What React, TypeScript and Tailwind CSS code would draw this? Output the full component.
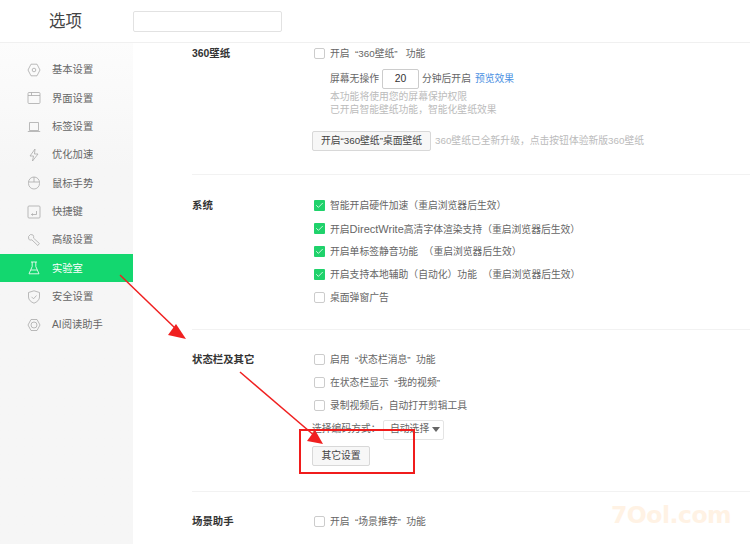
import { Check } from "lucide-react";
import type { ReactNode } from "react";

const FONT = "font-['Liberation_Sans','Noto_Sans_CJK_SC',sans-serif]";

function SideIcon({ name }: { name: string }) {
  const common = {
    width: 14,
    height: 14,
    viewBox: "0 0 14 14",
    fill: "none",
    stroke: "currentColor",
    strokeWidth: 0.8,
  };
  switch (name) {
    case "basic":
      return (
        <svg {...common}>
          <path d="M4 1.200h6L13 7l-3 5.800H4L1 7z" />
          <circle cx="7" cy="7" r="1.800" />
        </svg>
      );
    case "ui":
      return (
        <svg {...common}>
          <rect x="1" y="1.500" width="12" height="11" rx="1" />
          <path d="M1 4.500h12M4.500 1.500v3" />
        </svg>
      );
    case "tab":
      return (
        <svg {...common}>
          <path d="M2.500 2.500h9v8h-9zM0.800 11.500h12.400" />
        </svg>
      );
    case "speed":
      return (
        <svg {...common}>
          <path d="M8 1 3 8h3.500L5.500 13 11 6H7.500z" />
        </svg>
      );
    case "mouse":
      return (
        <svg {...common}>
          <rect x="1.500" y="1" width="11" height="12" rx="5.500" />
          <path d="M1.500 6h11M7 1v5" />
        </svg>
      );
    case "key":
      return (
        <svg {...common}>
          <rect x="1" y="1" width="12" height="12" rx="1" />
          <path d="M9.500 6v3.500h-5M6 8.500l-1.500 1 1.500 1" />
        </svg>
      );
    case "adv":
      return (
        <svg {...common}>
          <path d="M1.500 3.500 3.500 1.500 6 2c.8 1 .8 2 .4 3l6 5.500-1.600 2-6-5.700c-1 .4-2 .3-3-.5z" />
        </svg>
      );
    case "lab":
      return (
        <svg {...common}>
          <path d="M4 1h6M5.200 1v4.500L2 12.800h10L8.800 5.500V1M3.800 9h6.400" />
        </svg>
      );
    case "safe":
      return (
        <svg {...common}>
          <path d="M7 .8 12.500 2.500V7c0 3-2.500 5-5.500 6.200C4 12 1.500 10 1.500 7V2.500z" />
          <path d="m4.500 6.800 2 2 3-3.300" />
        </svg>
      );
    default:
      return (
        <svg {...common}>
          <path d="M4 1.500h6L13 7l-3 5.500H4L1 7z" />
          <circle cx="7" cy="7" r="3" />
        </svg>
      );
  }
}

const MENU = [
  { id: "basic", label: "基本设置" },
  { id: "ui", label: "界面设置" },
  { id: "tab", label: "标签设置" },
  { id: "speed", label: "优化加速" },
  { id: "mouse", label: "鼠标手势" },
  { id: "key", label: "快捷键" },
  { id: "adv", label: "高级设置" },
  { id: "lab", label: "实验室", active: true },
  { id: "safe", label: "安全设置" },
  { id: "ai", label: "AI阅读助手" },
];

function Option({ label, checked }: { label: ReactNode; checked?: boolean }) {
  return (
    <div className="flex items-center h-[23px] text-[9.8px] text-[#666]">
      {checked ? (
        <span className="w-[11px] h-[11px] rounded-[1px] bg-[#1fd26b] flex items-center justify-center shrink-0">
          <Check size={9} strokeWidth={2} className="text-white" />
        </span>
      ) : (
        <span className="w-[11px] h-[11px] rounded-[2px] border border-[#ccc] bg-white shrink-0" />
      )}
      <span className="ml-[5px] pt-px whitespace-pre">{label}</span>
    </div>
  );
}

function Section({ title, children, className }: { title: string; children: ReactNode; className: string }) {
  return (
    <section className={`flex border-b border-[#f2f2f2] ${className}`}>
      <h3 className="w-[122px] h-[23px] leading-[23px] text-[10.4px] font-bold text-[#333] shrink-0">{title}</h3>
      <div className="flex-1 min-w-0">{children}</div>
    </section>
  );
}

function Btn({ children, className }: { children: ReactNode; className: string }) {
  return (
    <button className={`h-[20px] pt-px border border-[#d8d8d8] rounded-[2px] bg-[#f7f7f7] text-[9.8px] text-[#444] whitespace-nowrap ${className}`}>
      {children}
    </button>
  );
}

export default function App() {
  return (
    <div className={`relative w-[750px] h-[544px] overflow-hidden bg-white ${FONT}`}>
      <header className="flex items-center h-[43px] border-b border-[#f0f0f0]">
        <h1 className="ml-[49px] w-[84px] text-[16.5px] text-[#444] font-normal">选项</h1>
        <input className="w-[149px] h-[21px] border border-[#e2e2e2] rounded-[2px] bg-white" />
      </header>

      <div className="flex h-[501px]">
        <nav className="w-[133px] pt-[13px] bg-gradient-to-b from-[#fcfcfc] to-[#f6f6f6] to-[25%] shrink-0">
          {MENU.map((m) => (
            <div
              key={m.id}
              className={`flex items-center h-[28.3px] pl-[27px] text-[10.3px] ${
                m.active ? "bg-[#13d76f] text-white" : "text-[#666]"
              }`}
            >
              <span className={m.active ? "text-white" : "text-[#aaa]"}>
                <SideIcon name={m.id} />
              </span>
              <span className="ml-[11px]">{m.label}</span>
            </div>
          ))}
        </nav>

        <main className="flex-1 min-w-0 pl-[59px]">
          <Section title="360壁纸" className="h-[133px] -mt-px">
            <Option label="开启  “360壁纸”   功能" />
            <div className="flex items-center mt-[4px] ml-[16px] text-[9.8px] text-[#666]">
              <span>屏幕无操作</span>
              <span className="w-[37px] h-[20px] ml-[3px] mr-[3px] border border-[#ccc] rounded-[2px] flex items-center justify-center text-[10.4px] text-[#333]">20</span>
              <span>分钟后开启</span>
              <span className="ml-[4px] text-[#4a90e2]">预览效果</span>
            </div>
            <p className="ml-[16px] mt-[1px] text-[9.8px] leading-[13px] text-[#bbb]">
              本功能将使用您的屏幕保护权限
              <br />
              已开启智能壁纸功能，智能化壁纸效果
            </p>
            <div className="flex items-center mt-[15px] -ml-[2px]">
              <Btn className="w-[119px]">开启“360壁纸”桌面壁纸</Btn>
              <span className="ml-[4px] text-[9.8px] text-[#bbb] whitespace-nowrap">360壁纸已全新升级，点击按钮体验新版360壁纸</span>
            </div>
          </Section>

          <Section title="系统" className="h-[155px] pt-[19px]">
            <Option checked label="智能开启硬件加速（重启浏览器后生效）" />
            <Option
              checked
              label={
                <>
                  开启<span className="text-[11px]">DirectWrite</span>高清字体渲染支持（重启浏览器后生效）
                </>
              }
            />
            <Option checked label="开启单标签静音功能  （重启浏览器后生效）" />
            <Option checked label="开启支持本地辅助（自动化）功能  （重启浏览器后生效）" />
            <Option label="桌面弹窗广告" />
          </Section>

          <Section title="状态栏及其它" className="h-[162px] pt-[18px]">
            <Option label="启用  “状态栏消息”  功能" />
            <Option label="在状态栏显示  “我的视频”" />
            <Option label="录制视频后，自动打开剪辑工具" />
            <div className="flex items-center h-[21px] -ml-[2px] mt-[2px] text-[9.8px] text-[#666] whitespace-nowrap">
              <span className="w-[71px]">选择编码方式：</span>
              <span className="flex items-center justify-between w-[61px] h-[20px] pl-[6px] pr-[3px] border border-[#e4e4e4] rounded-[2px]">
                自动选择
                <span className="w-0 h-0 border-x-[4.5px] border-x-transparent border-t-[5px] border-t-[#666]" />
              </span>
            </div>
            <Btn className="w-[58px] mt-[6px] -ml-[2px]">其它设置</Btn>
          </Section>

          <section className="flex pt-[18px]">
            <h3 className="w-[122px] h-[23px] leading-[23px] text-[10.4px] font-bold text-[#333] shrink-0">场景助手</h3>
            <Option label="开启  “场景推荐”  功能" />
          </section>
        </main>
      </div>

      {/* annotations on top of the screenshot */}
      <div className="absolute left-[299px] top-[429px] w-[116px] h-[45px] border-2 border-[#f01c1c]" />
      <svg className="absolute inset-0 pointer-events-none" width="750" height="544" viewBox="0 0 750 544">
        <path d="M120 275 175 328" stroke="#f02020" strokeWidth="1.5" />
        <path d="M186 339 176 324 168 335z" fill="#f02020" />
        <path d="M240 372 316 437" stroke="#f02020" strokeWidth="1.5" />
        <path d="M323 444 315 430 307 441z" fill="#f02020" />
      </svg>
      <div className="absolute left-[611px] top-[499px] text-[23.5px] leading-[32px] font-bold text-[#fff2e4] font-['DejaVu_Sans',sans-serif] tracking-[-0.5px]">
        7Ool.com
      </div>
    </div>
  );
}
